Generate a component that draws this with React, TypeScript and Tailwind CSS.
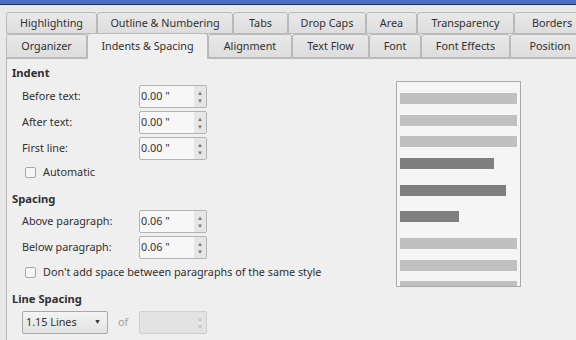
import React from "react";

const row1 = [
  { label: "Highlighting", w: "w-[91px]" },
  { label: "Outline & Numbering", w: "w-[136px]" },
  { label: "Tabs", w: "w-[55px]" },
  { label: "Drop Caps", w: "w-[78px]" },
  { label: "Area", w: "w-[51px]" },
  { label: "Transparency", w: "w-[97px]" },
  { label: "Borders", w: "w-[76px]" },
];

const row2 = [
  { label: "Organizer", w: "w-[81px]" },
  { label: "Indents & Spacing", w: "w-[121px]", active: true },
  { label: "Alignment", w: "w-[84px]" },
  { label: "Text Flow", w: "w-[77px]" },
  { label: "Font", w: "w-[52px]" },
  { label: "Font Effects", w: "w-[89px]" },
  { label: "Position", w: "w-[80px]" },
];

// paragraph preview: grey = surrounding paragraphs, dark = current one
const previewBars = [
  { w: "w-[117px]", dark: false, mt: "mt-[11px]" },
  { w: "w-[117px]", dark: false, mt: "mt-[11px]" },
  { w: "w-[117px]", dark: false, mt: "mt-[10px]" },
  { w: "w-[94px]", dark: true, mt: "mt-[11px]" },
  { w: "w-[106px]", dark: true, mt: "mt-[16px]" },
  { w: "w-[59px]", dark: true, mt: "mt-[15px]" },
  { w: "w-[117px]", dark: false, mt: "mt-[16px]" },
  { w: "w-[117px]", dark: false, mt: "mt-[11px]" },
  { w: "w-[117px]", dark: false, mt: "mt-[10px]" },
];

const Tab = ({ label, w, active }: { label: string; w: string; active?: boolean }) => (
  <div
    className={
      "shrink-0 flex items-center justify-center rounded-t-[3px] border border-[#b9b9b9] " +
      w +
      (active
        ? " h-[26px] -mb-px border-b-0 bg-[#efefef] z-10"
        : " h-full bg-gradient-to-b from-[#e9e9e9] to-[#dddddd]")
    }
  >
    {label}
  </div>
);

const SpinBox = ({ value, disabled }: { value?: string; disabled?: boolean }) => (
  <div
    className={
      "flex h-[23px] w-[68px] rounded-[2px] border " +
      (disabled ? "border-[#cfcfcf] bg-[#e3e3e3]" : "border-[#b3b3b3] bg-[#f7f7f7]")
    }
  >
    <div className="flex-1 flex items-center pl-px text-[#333]">{value}</div>
    <div
      className={
        "w-[12px] flex flex-col items-center justify-center text-[6px] leading-[8px] " +
        (disabled ? "text-[#c4c4c4] bg-[#e3e3e3]" : "text-[#777] bg-[#e6e6e6]")
      }
    >
      <span>▲</span>
      <span>▼</span>
    </div>
  </div>
);

const FieldRow = ({ label, value, mt }: { label: string; value: string; mt: string }) => (
  <div className={"flex items-center h-[23px] " + mt}>
    <div className="w-[127px] pl-[10px]">{label}</div>
    <SpinBox value={value} />
  </div>
);

const CheckRow = ({ label, mt }: { label: string; mt: string }) => (
  <div className={"flex items-center h-[20px] pl-[13px] " + mt}>
    <div className="w-[11px] h-[11px] rounded-[2px] border border-[#a8a8a8] bg-[#f6f6f6]" />
    <span className="ml-[7px]">{label}</span>
  </div>
);

const App = () => {
  return (
    <div
      className="w-[576px] h-[340px] overflow-hidden bg-[#e9e9e9] text-[10.8px] text-[#303030]"
      style={{ fontFamily: '"Noto Sans", "Open Sans", sans-serif' }}
    >
      <div className="h-[5px] bg-[#4a6fc1] border-b border-[#1d2f59]" />
      <div className="flex pl-[6px] mt-[7px] h-[22px]">
        {row1.map((t) => (
          <Tab key={t.label} {...t} />
        ))}
      </div>
      <div className="flex items-end pl-[6px] h-[24px]">
        {row2.map((t) => (
          <Tab key={t.label} {...t} />
        ))}
      </div>
      <div className="ml-[6px] h-[300px] border-l border-t border-[#b9b9b9] bg-[#efefef] flex">
        <div className="w-[380px] pl-[5px]">
          <div className="mt-[6px] h-[16px] flex items-center font-bold text-[11.2px]">Indent</div>
          <FieldRow label="Before text:" value={'0.00 "'} mt="mt-[4px]" />
          <FieldRow label="After text:" value={'0.00 "'} mt="mt-[3px]" />
          <FieldRow label="First line:" value={'0.00 "'} mt="mt-[3px]" />
          <CheckRow label="Automatic" mt="mt-[2px]" />
          <div className="mt-[9px] h-[16px] flex items-center font-bold text-[11.2px]">Spacing</div>
          <FieldRow label="Above paragraph:" value={'0.06 "'} mt="mt-[3px]" />
          <FieldRow label="Below paragraph:" value={'0.06 "'} mt="mt-[3px]" />
          <CheckRow label="Don't add space between paragraphs of the same style" mt="mt-[3px]" />
          <div className="mt-[9px] h-[16px] flex items-center font-bold text-[11.2px]">Line Spacing</div>
          <div className="mt-[4px] flex items-center h-[23px] pl-[10px]">
            <div className="w-[86px] h-[23px] flex items-center justify-between px-[3px] rounded-[2px] border border-[#a9a9a9] bg-gradient-to-b from-[#f4f4f4] to-[#e2e2e2]">
              <span>1.15 Lines</span>
              <span className="text-[7px] text-[#333] pr-[3px]">▼</span>
            </div>
            <span className="ml-[10px] w-[21px] text-[#a0a0a0]">of</span>
            <SpinBox disabled />
          </div>
        </div>
        <div className="pl-[9px] pt-[22px]">
          <div className="w-[125px] h-[206px] border border-[#a9a9a9] bg-[#f5f5f5] pl-[3px] overflow-hidden">
            {previewBars.map((b, i) => (
              <div
                key={i}
                className={
                  "h-[11px] " + b.w + " " + b.mt + " " + (b.dark ? "bg-[#7f7f7f]" : "bg-[#c0c0c0]")
                }
              />
            ))}
          </div>
        </div>
      </div>
    </div>
  );
};

export default App;
